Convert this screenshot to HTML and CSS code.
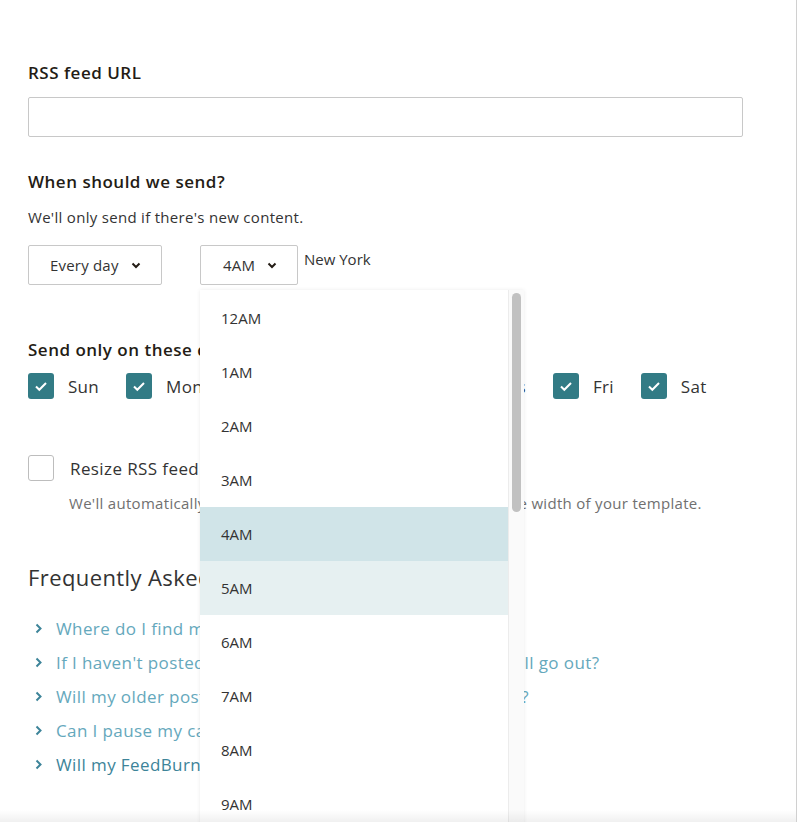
FILE: index.html
```html
<!DOCTYPE html>
<html lang="en">
<head>
    <meta charset="UTF-8">
    <meta name="viewport" content="width=device-width, initial-scale=1.0">
    <title>RSS campaign - Settings</title>
    <link rel="stylesheet" href="styles.css">
</head>
<body>
    <div class="page">
        <label class="heading first" for="rss-url">RSS feed URL</label>
        <input type="text" id="rss-url" class="text-input">

        <h3 class="heading">When should we send?</h3>
        <p class="hint">We'll only send if there's new content.</p>

        <div class="send-row">
            <button class="select select-day">Every day
                <svg class="caret" width="10" height="7" viewBox="0 0 10 7"><path d="M1.5 1.5 L5 5 L8.5 1.5" fill="none" stroke="#241c15" stroke-width="2"/></svg>
            </button>
            <div class="time-wrap">
                <button class="select select-time">4AM
                    <svg class="caret" width="10" height="7" viewBox="0 0 10 7"><path d="M1.5 1.5 L5 5 L8.5 1.5" fill="none" stroke="#241c15" stroke-width="2"/></svg>
                </button>
                <div class="menu">
                    <ul class="menu-list">
                        <li>12AM</li>
                        <li>1AM</li>
                        <li>2AM</li>
                        <li>3AM</li>
                        <li class="selected">4AM</li>
                        <li class="hover">5AM</li>
                        <li>6AM</li>
                        <li>7AM</li>
                        <li>8AM</li>
                        <li>9AM</li>
                        <li>10AM</li>
                    </ul>
                    <div class="scroll-track"><div class="scroll-thumb"></div></div>
                </div>
            </div>
            <span class="zone">New York</span>
        </div>

        <h3 class="heading days-heading">Send only on these days</h3>
        <div class="days">
            <label class="day"><span class="check on"><svg width="26" height="26" viewBox="0 0 26 26"><path d="M8 13.5 L11.3 16.8 L18 10" fill="none" stroke="#fff" stroke-width="2"/></svg></span>Sun</label>
            <label class="day"><span class="check on"><svg width="26" height="26" viewBox="0 0 26 26"><path d="M8 13.5 L11.3 16.8 L18 10" fill="none" stroke="#fff" stroke-width="2"/></svg></span>Mon</label>
            <label class="day"><span class="check on"><svg width="26" height="26" viewBox="0 0 26 26"><path d="M8 13.5 L11.3 16.8 L18 10" fill="none" stroke="#fff" stroke-width="2"/></svg></span>Tues</label>
            <label class="day"><span class="check on"><svg width="26" height="26" viewBox="0 0 26 26"><path d="M8 13.5 L11.3 16.8 L18 10" fill="none" stroke="#fff" stroke-width="2"/></svg></span>Wed</label>
            <label class="day"><span class="check on"><svg width="26" height="26" viewBox="0 0 26 26"><path d="M8 13.5 L11.3 16.8 L18 10" fill="none" stroke="#fff" stroke-width="2"/></svg></span>Thurs</label>
            <label class="day"><span class="check on"><svg width="26" height="26" viewBox="0 0 26 26"><path d="M8 13.5 L11.3 16.8 L18 10" fill="none" stroke="#fff" stroke-width="2"/></svg></span>Fri</label>
            <label class="day"><span class="check on"><svg width="26" height="26" viewBox="0 0 26 26"><path d="M8 13.5 L11.3 16.8 L18 10" fill="none" stroke="#fff" stroke-width="2"/></svg></span>Sat</label>
        </div>

        <label class="resize">
            <span class="check"></span>
            <span>Resize RSS feed images</span>
        </label>
        <p class="resize-note">We'll automatically resize any images in your RSS feed to fit the width of your template.</p>

        <h2 class="faq-title">Frequently Asked Questions</h2>
        <ul class="faq">
            <li><svg class="arrow" width="8" height="11" viewBox="0 0 8 11"><path d="M1.5 1.5 L5.5 5.5 L1.5 9.5" fill="none" stroke="#3d8499" stroke-width="2"/></svg><a href="#">Where do I find my RSS feed URL?</a></li>
            <li><svg class="arrow" width="8" height="11" viewBox="0 0 8 11"><path d="M1.5 1.5 L5.5 5.5 L1.5 9.5" fill="none" stroke="#3d8499" stroke-width="2"/></svg><a href="#">If I haven't posted new content, will my RSS campaign still go out?</a></li>
            <li><svg class="arrow" width="8" height="11" viewBox="0 0 8 11"><path d="M1.5 1.5 L5.5 5.5 L1.5 9.5" fill="none" stroke="#3d8499" stroke-width="2"/></svg><a href="#">Will my older posts be sent out in my first RSS campaign?</a></li>
            <li><svg class="arrow" width="8" height="11" viewBox="0 0 8 11"><path d="M1.5 1.5 L5.5 5.5 L1.5 9.5" fill="none" stroke="#3d8499" stroke-width="2"/></svg><a href="#">Can I pause my campaign?</a></li>
            <li><svg class="arrow" width="8" height="11" viewBox="0 0 8 11"><path d="M1.5 1.5 L5.5 5.5 L1.5 9.5" fill="none" stroke="#3d8499" stroke-width="2"/></svg><a href="#" class="visited">Will my FeedBurner subscribers be added?</a></li>
        </ul>
        <div class="bottom-fade"></div>
    </div>
</body>
</html>
```

FILE: styles.css
```css
body {
    margin: 0;
    font-family: "Open Sans", Arial, sans-serif;
    color: #241c15;
    background: #fff;
}
.page {
    position: relative;
    width: 740px;
    height: 822px;
    padding: 0 28px;
    border-right: 1px solid #d0d0d0;
    overflow: hidden;
    box-sizing: content-box;
}
.heading {
    display: block;
    margin: 0;
    font-size: 17px;
    font-weight: 600;
    line-height: 24px;
    letter-spacing: 0.5px;
}
.heading.first {
    padding-top: 61px;
}
.text-input {
    display: block;
    box-sizing: border-box;
    width: 715px;
    height: 40px;
    margin: 12px 0 33px;
    border: 1px solid #c8c8c8;
    border-radius: 2px;
}
.hint {
    margin: 13px 0 18px;
    font-size: 15px;
    line-height: 20px;
    letter-spacing: 0.3px;
    color: #333;
}
.send-row {
    display: flex;
    align-items: flex-start;
    height: 40px;
}
.select {
    display: flex;
    align-items: center;
    box-sizing: border-box;
    height: 40px;
    padding: 0 20px;
    background: #fff;
    border: 1px solid #c8c8c8;
    border-radius: 2px;
    font-family: inherit;
    font-size: 15px;
    letter-spacing: 0.2px;
    color: #333;
}
.select-day {
    width: 134px;
    padding-left: 21px;
    margin-right: 38px;
}
.select-time {
    width: 98px;
    padding-left: 22px;
}
.caret {
    margin-left: auto;
}
.time-wrap {
    position: relative;
}
.zone {
    margin: 4px 0 0 6px;
    font-size: 15px;
    color: #333;
}
.menu {
    position: absolute;
    top: 45px;
    left: 0;
    z-index: 5;
    display: flex;
    width: 324px;
    height: 600px;
    background: #fff;
    box-shadow: 0 0 4px rgba(0, 0, 0, 0.08);
}
.menu-list {
    list-style: none;
    flex: 1;
    margin: 0;
    padding: 1px 0 0;
}
.menu-list li {
    height: 54px;
    line-height: 54px;
    padding-left: 21px;
    font-size: 15px;
    color: #333;
}
.menu-list .selected {
    background: #d0e4e8;
}
.menu-list .hover {
    background: #e6f0f1;
}
.scroll-track {
    width: 15px;
    background: #fafafa;
    border-left: 1px solid #ececec;
    padding-top: 3px;
}
.scroll-thumb {
    width: 9px;
    height: 219px;
    margin-left: 3px;
    border-radius: 5px;
    background: #c1c1c1;
}
.days-heading {
    margin-top: 53px;
}
.days {
    display: flex;
    gap: 27px;
    margin-top: 11px;
}
.day {
    display: flex;
    align-items: center;
    gap: 14px;
    font-size: 17px;
    letter-spacing: 0.3px;
    color: #333;
}
.check {
    display: block;
    box-sizing: border-box;
    width: 26px;
    height: 26px;
    border: 1px solid #bdbdbd;
    border-radius: 3px;
    background: #fff;
}
.check.on {
    border: none;
    background: #327b85;
}
.check svg {
    display: block;
}
.resize {
    display: flex;
    align-items: center;
    gap: 16px;
    margin-top: 56px;
    font-size: 17px;
    letter-spacing: 0.4px;
    color: #333;
}
.resize-note {
    margin: 12px 0 0 41px;
    font-size: 15px;
    line-height: 20px;
    letter-spacing: 0.3px;
    color: #707070;
}
.faq-title {
    margin: 50px 0 0;
    font-size: 22px;
    font-weight: 400;
    line-height: 28px;
    letter-spacing: 0.4px;
    color: #333;
}
.faq {
    list-style: none;
    margin: 20px 0 0;
    padding: 0;
}
.faq li {
    display: flex;
    align-items: center;
    height: 34px;
}
.arrow {
    margin: 0 13px 0 7px;
}
.faq a {
    font-size: 17px;
    letter-spacing: 0.4px;
    color: #65a8bc;
    text-decoration: none;
}
.faq a.visited {
    color: #3d8499;
}
.bottom-fade {
    position: absolute;
    left: 0;
    right: 0;
    bottom: 0;
    height: 12px;
    z-index: 6;
    background: linear-gradient(rgba(0, 0, 0, 0), rgba(0, 0, 0, 0.06));
}
```
